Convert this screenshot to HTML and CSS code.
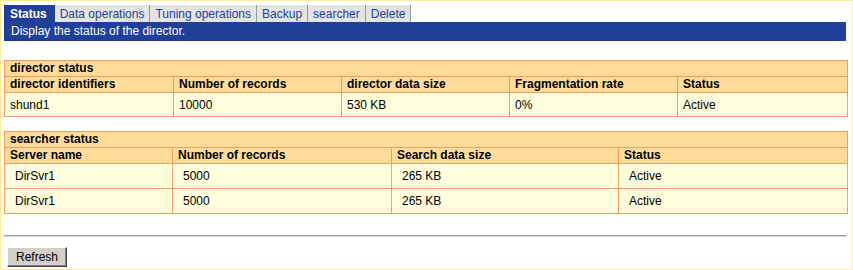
FILE: index.html
```html
<!DOCTYPE html>
<html>
<head>
<meta charset="utf-8">
<link rel="stylesheet" href="styles.css">
</head>
<body>
<div class="tabs">
  <span class="tab active">Status</span>
  <span class="tab">Data operations</span>
  <span class="tab">Tuning operations</span>
  <span class="tab">Backup</span>
  <span class="tab">searcher</span>
  <span class="tab">Delete</span>
</div>
<div class="desc">Display the status of the director.</div>

<table class="grid first">
  <colgroup><col style="width:169px"><col style="width:168px"><col style="width:168px"><col style="width:168px"><col></colgroup>
  <tr class="title"><th colspan="5">director status</th></tr>
  <tr class="head"><th>director identifiers</th><th>Number of records</th><th>director data size</th><th>Fragmentation rate</th><th>Status</th></tr>
  <tr class="data"><td>shund1</td><td>10000</td><td>530 KB</td><td>0%</td><td>Active</td></tr>
</table>

<table class="grid second">
  <colgroup><col style="width:168px"><col style="width:219px"><col style="width:227px"><col></colgroup>
  <tr class="title"><th colspan="4">searcher status</th></tr>
  <tr class="head"><th>Server name</th><th>Number of records</th><th>Search data size</th><th>Status</th></tr>
  <tr class="data indent"><td>DirSvr1</td><td>5000</td><td>265 KB</td><td>Active</td></tr>
  <tr class="data indent"><td>DirSvr1</td><td>5000</td><td>265 KB</td><td>Active</td></tr>
</table>

<hr class="rule">
<button class="btn" type="button">Refresh</button>
</body>
</html>
```

FILE: styles.css
```css
html, body {
  height: 100%;
}
body {
  margin: 0;
  box-sizing: border-box;
  border: 1px solid #ffec94;
  padding: 4px 5px 0 3px;
  font-family: "Liberation Sans", Arial, sans-serif;
  font-size: 12px;
  color: #000;
  background: #fff;
}
.tabs {
  display: flex;
  height: 17px;
}
.tab {
  display: flex;
  align-items: center;
  padding: 0 5px;
  color: #1f3f99;
  border-right: 1px solid #999;
  background-color: #e6e6e6;
  background-image: repeating-conic-gradient(#dcdcdc 0 25%, #ececec 0 50%);
  background-size: 2px 2px;
  white-space: nowrap;
}
.tab.active {
  background: #1f3f99;
  color: #fff;
  font-weight: bold;
  border-right: 1px solid #1f3f99;
  padding: 0 7px 0 6px;
}
.desc {
  background: #1f3f99;
  color: #fff;
  height: 19px;
  line-height: 19px;
  padding-left: 7px;
  margin-right: 1px;
}
.grid {
  width: 844px;
  border-collapse: collapse;
  table-layout: fixed;
  border: 1px solid #f89c63;
}
.grid.first {
  margin-top: 19px;
}
.grid.second {
  margin-top: 14px;
}
.grid th, .grid td {
  border: 1px solid #f89c63;
  text-align: left;
  padding: 0 5px;
  white-space: nowrap;
  overflow: hidden;
}
.grid th {
  background: #ffdd99;
  font-weight: bold;
  height: 15px;
  line-height: 15px;
}
.grid td {
  background: #ffffdd;
  height: 23px;
}
.grid .indent td {
  padding-left: 10px;
  height: 24px;
}
.rule {
  margin: 21px 1px 0 0;
  height: 0;
  border: 0;
  border-top: 1px solid #999;
  border-bottom: 1px solid #d8d8d8;
}
.btn {
  display: block;
  margin: 10px 0 0 3px;
  width: 60px;
  height: 20px;
  padding: 0;
  font-family: "Liberation Sans", Arial, sans-serif;
  font-size: 12px;
  color: #000;
  background: #d4d0c8;
  border: 1px solid;
  border-color: #fff #404040 #404040 #fff;
  box-shadow: inset -1px -1px 0 #808080;
}
```
